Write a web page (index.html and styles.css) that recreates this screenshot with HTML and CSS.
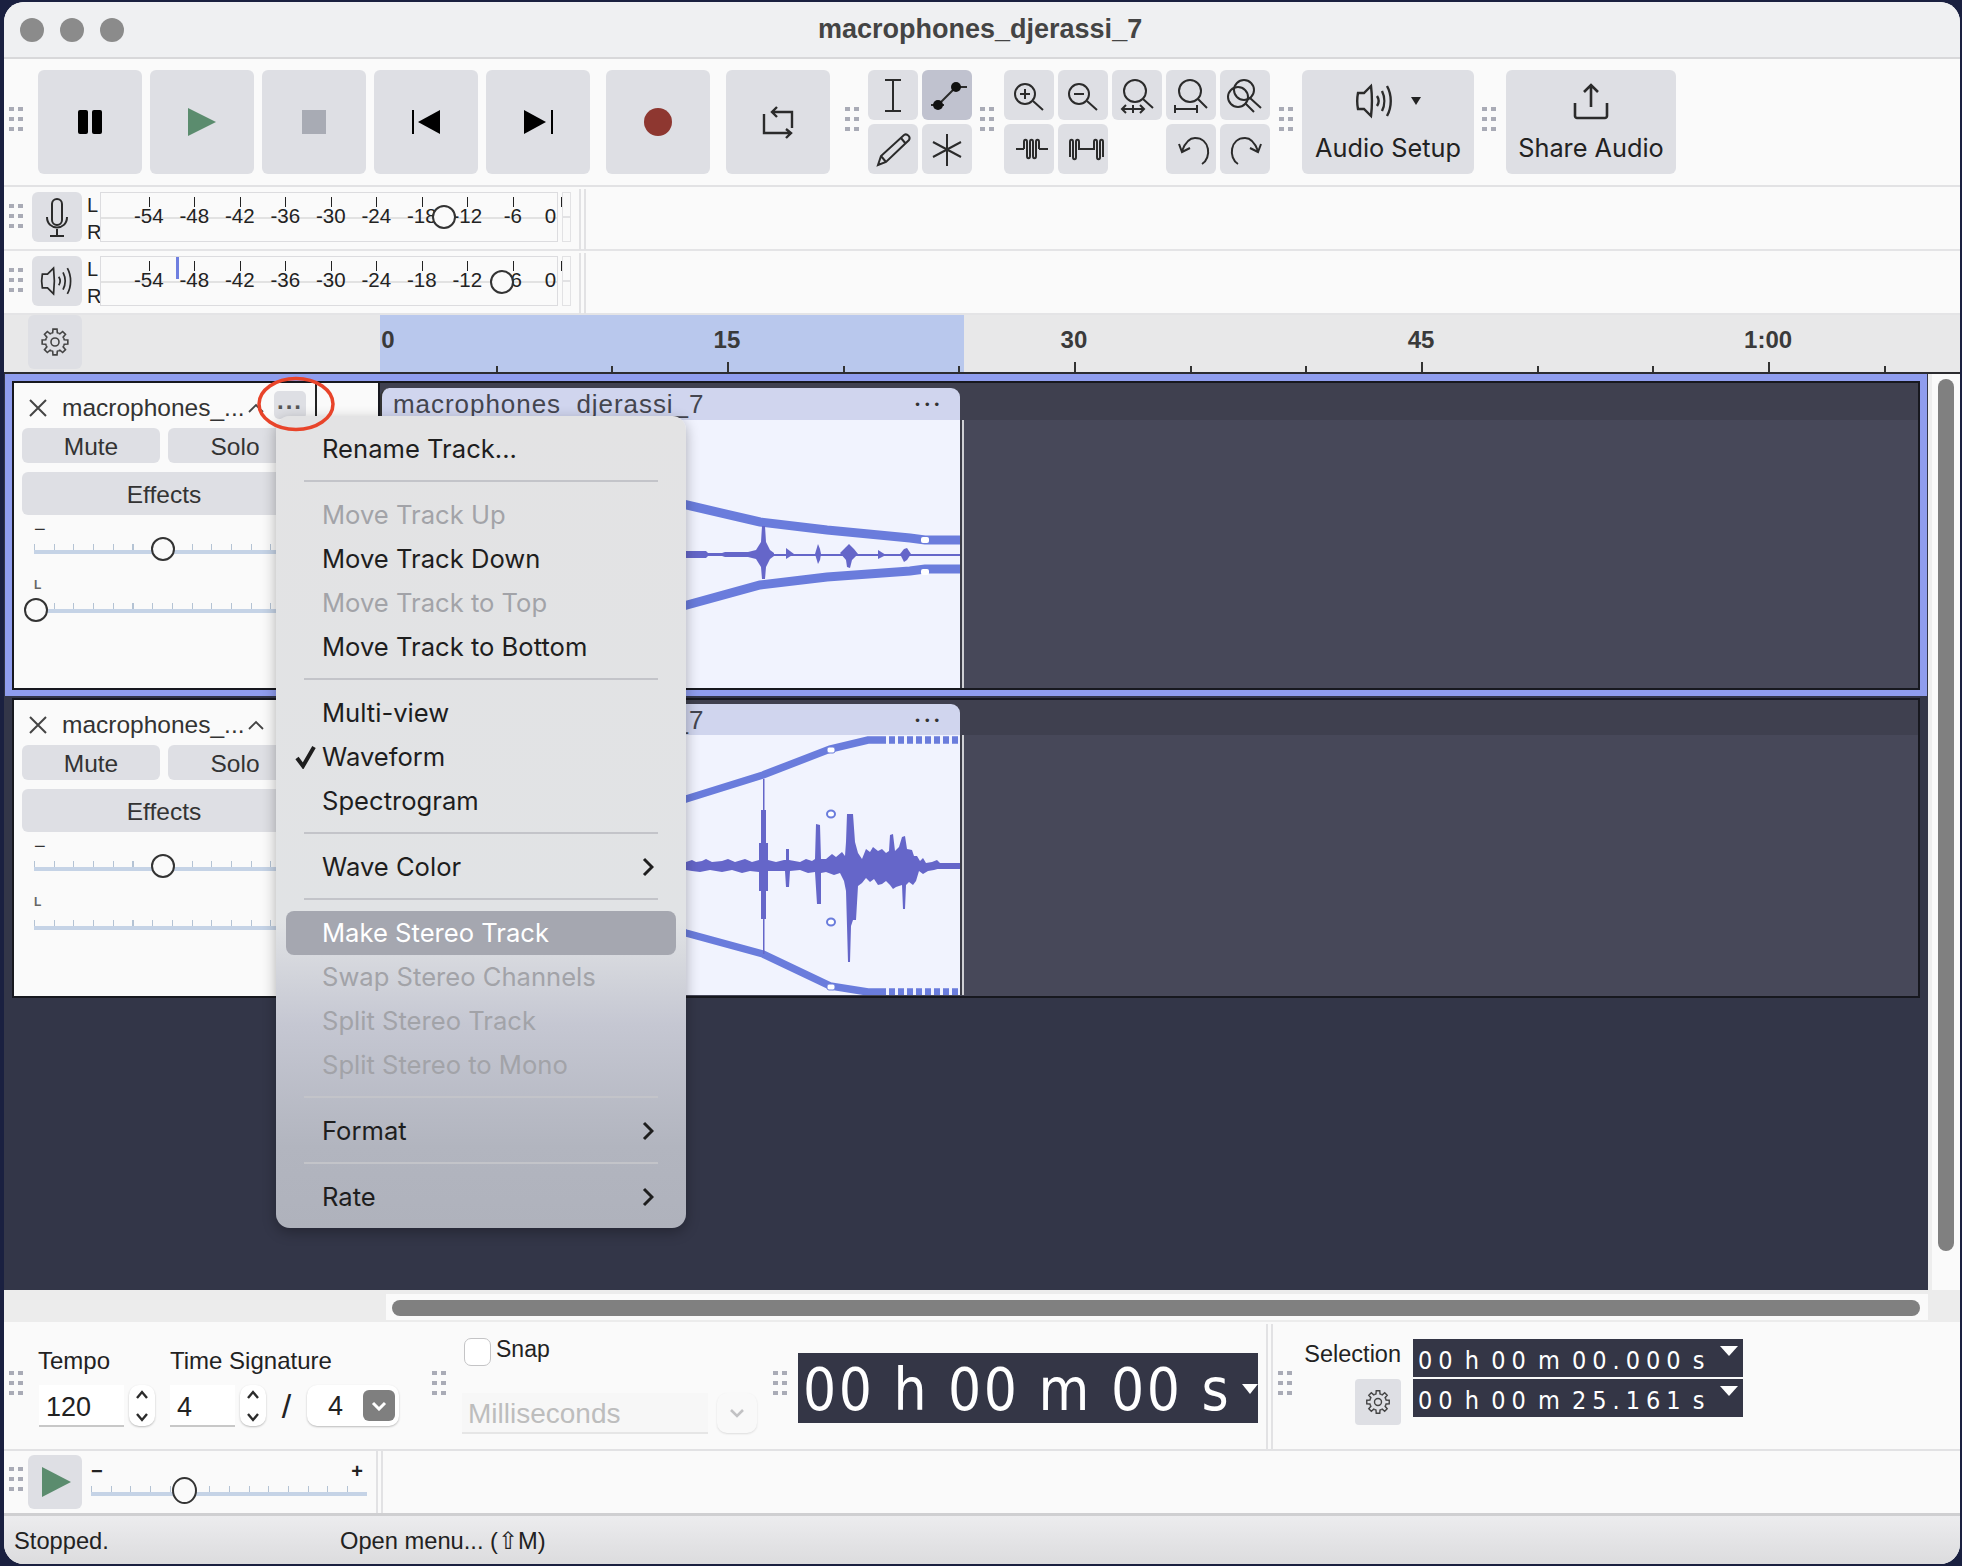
FILE: index.html
```html
<!DOCTYPE html>
<html lang="en">
<head>
<meta charset="UTF-8">
<title>macrophones_djerassi_7</title>
<link rel="stylesheet" href="styles.css">
</head>
<body>
<svg class="defs" width="0" height="0">
    <defs>
        <g id="gear">
            <polyline id="gearTooth" points="8.78,-3.64 9.22,-2.30 12.84,-2.03 12.84,2.03 9.22,2.30 8.78,3.64"/>
            <use href="#gearTooth" transform="rotate(45)"/>
            <use href="#gearTooth" transform="rotate(90)"/>
            <use href="#gearTooth" transform="rotate(135)"/>
            <use href="#gearTooth" transform="rotate(180)"/>
            <use href="#gearTooth" transform="rotate(225)"/>
            <use href="#gearTooth" transform="rotate(270)"/>
            <use href="#gearTooth" transform="rotate(315)"/>
            <circle r="4"/>
        </g>
        <path id="speaker" d="M2 12h6l7-7c1 8 1 22 0 30l-7-7H2c-1-5-1-11 0-16zM21 15c2 3 2 7 0 10M26 10c3 6 3 14 0 20M31 5c5 9 5 21 0 30"/>
    </defs>
</svg>

<div class="window">
    <!-- title bar -->
    <div class="titlebar">
        <div class="lights"><span></span><span></span><span></span></div>
        <div class="title">macrophones_djerassi_7</div>
    </div>

    <!-- transport + tools -->
    <div class="toolbar">
        <div class="grip g-first"></div>
        <div class="transport">
            <button class="tbtn"><svg class="ico" viewBox="0 0 40 40"><rect x="8" y="8" width="10" height="24" rx="2"/><rect x="22" y="8" width="10" height="24" rx="2"/></svg></button>
            <button class="tbtn"><svg class="ico" viewBox="0 0 40 40"><polygon class="green" points="6,6 34,20 6,34"/></svg></button>
            <button class="tbtn"><svg class="ico" viewBox="0 0 40 40"><rect class="stop" x="8" y="8" width="24" height="24"/></svg></button>
            <button class="tbtn"><svg class="ico" viewBox="0 0 40 40"><rect x="6" y="8" width="2" height="24"/><polygon points="12,20 34,8 34,32"/></svg></button>
            <button class="tbtn"><svg class="ico" viewBox="0 0 40 40"><polygon points="6,8 28,20 6,32"/><rect x="33" y="8" width="2" height="24"/></svg></button>
            <button class="tbtn t-gap"><svg class="ico" viewBox="0 0 40 40"><circle class="rec" cx="20" cy="20" r="14"/></svg></button>
            <button class="tbtn t-gap"><svg class="ico line" viewBox="0 0 40 40"><path d="M34 26V10H15M19 5l-5 5 5 5M6 12v19h26M28 27l5 4-5 5"/></svg></button>
        </div>
        <div class="grip g-tools"></div>
        <div class="tools two">
            <button class="sbtn"><svg viewBox="0 0 50 50" class="line"><path d="M25 10v31M17 10h16M17 41h16"/></svg></button>
            <button class="sbtn on"><svg viewBox="0 0 50 50" class="line"><path d="M9 35h13M30 17h15M16 35l18-18"/><circle class="dot" cx="16" cy="35" r="5"/><circle class="dot" cx="34" cy="17" r="5"/></svg></button>
            <button class="sbtn"><svg viewBox="0 0 50 50" class="line"><path d="M10 41l3-9 23-21c3-2 7 2 5 5L18 38zM13 32l5 6M33 14l5 6"/></svg></button>
            <button class="sbtn"><svg viewBox="0 0 50 50" class="line"><path d="M25 10v32M11 18l28 15M11 33l28-15"/></svg></button>
        </div>
        <div class="grip g-zoom"></div>
        <div class="tools five">
            <button class="sbtn"><svg viewBox="0 0 50 50" class="line"><circle cx="21" cy="24" r="10"/><path d="M21 19v10M16 24h10M29 31l10 9"/></svg></button>
            <button class="sbtn"><svg viewBox="0 0 50 50" class="line"><circle cx="21" cy="24" r="10"/><path d="M16 24h10M29 31l10 9"/></svg></button>
            <button class="sbtn"><svg viewBox="0 0 50 50" class="line"><circle cx="23" cy="21" r="11"/><path d="M31 29l10 9M10 39h22M14 35l-4 4 4 4M28 35l4 4-4 4M21 35v8"/></svg></button>
            <button class="sbtn"><svg viewBox="0 0 50 50" class="line"><circle cx="24" cy="21" r="11"/><path d="M32 29l9 9M9 39h22M9 35v8M31 35v8"/></svg></button>
            <button class="sbtn"><svg viewBox="0 0 50 50" class="line"><circle cx="24" cy="20" r="10"/><circle cx="18" cy="27" r="10"/><path d="M30 28l11 10M25 33l9 9"/></svg></button>
            <button class="sbtn"><svg viewBox="0 0 50 50" class="line"><path d="M12 25h8M35 25h9M20 25v-7c0-3 3-3 3 0v14c0 3 3 3 3 0V18c0-3 3-3 3 0v14c0 3 3 3 3 0V18c0-3 3-3 3 0v7"/></svg></button>
            <button class="sbtn"><svg viewBox="0 0 50 50" class="line"><path d="M12 33V18c0-3 3-3 3 0v15c0 3 3 3 3 0V18c0-3 3-3 3 0v7h15v-7c0-3 3-3 3 0v15c0 3 3 3 3 0V18c0-3 3-3 3 0v15"/></svg></button>
            <span class="sblank"></span>
            <button class="sbtn"><svg viewBox="0 0 50 50" class="line"><path d="M36 40c10-6 8-26-7-26-6 0-10 5-13 13M13 20l3 8 8-4"/></svg></button>
            <button class="sbtn"><svg viewBox="0 0 50 50" class="line"><path d="M18 40C8 34 10 14 25 14c6 0 10 5 13 13M41 20l-3 8-8-4"/></svg></button>
        </div>
        <div class="grip g-setup"></div>
        <button class="wbtn setup">
            <span class="wico"><svg class="line" width="40" height="40" viewBox="0 0 40 40"><use href="#speaker"/></svg><i class="drop"></i></span>
            <span>Audio Setup</span>
        </button>
        <div class="grip g-share"></div>
        <button class="wbtn share">
            <span class="wico"><svg class="line wide" width="40" height="40" viewBox="0 0 40 40"><path d="M20 26V4M13 11l7-7 7 7M4 22v13c0 1 1 2 2 2h28c1 0 2-1 2-2V22"/></svg></span>
            <span>Share Audio</span>
        </button>
    </div>

    <!-- recording meter -->
    <div class="meter-row">
        <div class="grip g-meter"></div>
        <button class="mbtn"><svg class="line" viewBox="0 0 50 50" width="50" height="50"><rect x="20" y="7" width="10" height="26" rx="5"/><path d="M15 25c0 14 20 14 20 0M25 37v6M18 44h14"/></svg></button>
        <div class="lr"><span>L</span><span>R</span></div>
        <div class="meter">
            <div class="db-scale">
                <span class="db">-54</span><span class="db">-48</span><span class="db">-42</span><span class="db">-36</span><span class="db">-30</span><span class="db">-24</span><span class="db">-18</span><span class="db">-12</span><span class="db">-6</span><span class="db">0</span>
            </div>
            <i class="knob k-meter1"></i>
        </div>
        <div class="meter-end"><i></i><i></i></div>
        <div class="vdiv"></div>
    </div>

    <!-- playback meter -->
    <div class="meter-row">
        <div class="grip g-meter"></div>
        <button class="mbtn"><svg class="line" viewBox="-10 -9 58 58" width="50" height="50"><use href="#speaker"/></svg></button>
        <div class="lr"><span>L</span><span>R</span></div>
        <div class="meter">
            <div class="db-scale">
                <span class="db">-54</span><span class="db">-48</span><span class="db">-42</span><span class="db">-36</span><span class="db">-30</span><span class="db">-24</span><span class="db">-18</span><span class="db">-12</span><span class="db">-6</span><span class="db">0</span>
            </div>
            <i class="peak"></i>
            <i class="knob k-meter2"></i>
        </div>
        <div class="meter-end"><i></i><i></i></div>
        <div class="vdiv"></div>
    </div>

    <!-- timeline -->
    <div class="ruler">
        <i class="ruler-sel"></i>
        <button class="gear-btn"><svg class="line thin" viewBox="-16 -16 32 32" width="32" height="32"><use href="#gear"/></svg></button>
        <div class="ruler-scale">
            <div class="rc major zero"><b>0</b></div>
            <div class="rc"></div><div class="rc"></div>
            <div class="rc major"><b>15</b></div>
            <div class="rc"></div><div class="rc"></div>
            <div class="rc major"><b>30</b></div>
            <div class="rc"></div><div class="rc"></div>
            <div class="rc major"><b>45</b></div>
            <div class="rc"></div><div class="rc"></div>
            <div class="rc major"><b>1:00</b></div>
            <div class="rc"></div><div class="rc"></div>
        </div>
    </div>

    <!-- tracks -->
    <div class="main">
        <div class="tracks">
            <div class="track-wrap selected">
                <div class="track">
                    <div class="panel">
                        <div class="panel-head">
                            <svg class="close line" viewBox="0 0 20 20" width="20" height="20"><path d="M2 2l16 16M18 2L2 18"/></svg>
                            <span class="tname">macrophones_...</span>
                            <svg class="collapse line" viewBox="0 0 16 10" width="16" height="10"><path d="M1 9l7-7 7 7"/></svg>
                            <span class="more">...</span>
                            <i class="split"></i>
                        </div>
                        <div class="mute-row"><button class="pbtn mute">Mute</button><button class="pbtn solo">Solo</button></div>
                        <button class="pbtn effects">Effects</button>
                        <div class="slider gain"><span class="mark">−</span><div class="scale"></div><i class="knob k-gain"></i></div>
                        <div class="slider pan"><span class="mark small">L</span><div class="scale"></div><i class="knob k-pan"></i></div>
                    </div>
                    <div class="lane">
                        <div class="clip">
                            <div class="clip-head"><span>macrophones_djerassi_7</span><em>•••</em></div>
                            <div class="clip-body tall">
                                <svg viewBox="380 419 580 268" width="580" height="268">
                                    <polyline class="env" points="600,484 687,504 760,521 827,529 910,537 925,539 960,539"/>
                                    <polyline class="env" points="600,628 687,604 760,584 827,576 910,570 925,568 960,568"/>
                                    <rect class="wave" x="600" y="553" width="360" height="2"/>
                                    <polygon class="wave" points="686,550 706,550 708,552 722,552 725,551 736,551 748,551 756,549 761,541 762,525 765,525 766,541 770,549 774,552 774,555 770,558 766,566 765,578 762,578 761,566 756,558 748,556 736,556 725,556 722,555 708,555 706,557 686,557"/>
                                    <polygon class="wave" points="786,547 794,553 786,558"/>
                                    <polygon class="wave" points="815,553 818,543 820,548 821,553 820,559 818,563"/>
                                    <polygon class="wave" points="840,552 846,546 849,543 854,548 858,553 852,559 850,567 847,566 846,559"/>
                                    <polygon class="wave" points="878,549 886,554 878,558"/>
                                    <polygon class="wave" points="900,553 904,548 907,547 911,553 907,559 904,561"/>
                                    <rect class="pt" x="921" y="536" width="8" height="6" rx="2"/>
                                    <rect class="pt" x="921" y="568" width="8" height="6" rx="2"/>
                                </svg>
                            </div>
                        </div>
                    </div>
                </div>
            </div>
            <div class="track-wrap">
                <div class="track second">
                    <div class="panel">
                        <div class="panel-head">
                            <svg class="close line" viewBox="0 0 20 20" width="20" height="20"><path d="M2 2l16 16M18 2L2 18"/></svg>
                            <span class="tname">macrophones_...</span>
                            <svg class="collapse line" viewBox="0 0 16 10" width="16" height="10"><path d="M1 9l7-7 7 7"/></svg>
                        </div>
                        <div class="mute-row"><button class="pbtn mute">Mute</button><button class="pbtn solo">Solo</button></div>
                        <button class="pbtn effects">Effects</button>
                        <div class="slider gain"><span class="mark">−</span><div class="scale"></div><i class="knob k-gain"></i></div>
                        <div class="slider pan"><span class="mark small">L</span><div class="scale"></div></div>
                    </div>
                    <div class="lane">
                        <div class="clip">
                            <div class="clip-head"><span>macrophones_djerassi_7</span><em>•••</em></div>
                            <div class="clip-body">
                                <svg viewBox="380 734 580 260" width="580" height="260">
                                    <polyline class="env e2" points="600,826 686,798 763,774 830,748 868,739 880,739"/>
                                    <polyline class="env e2 dash" points="880,739 960,739"/>
                                    <polyline class="env e2" points="600,904 686,932 763,953 830,985 868,991 880,991"/>
                                    <polyline class="env e2 dash" points="880,991 960,991"/>
                                    <rect class="wave" x="600" y="862" width="360" height="6"/>
                                    <polygon class="wave" points="686,861 692,859 696,861 702,860 706,858 712,861 722,860 728,858 735,861 745,858 752,861 759,859 759,842 761,842 761,809 763,809 763,778 764.5,778 764.5,809 766,809 766,842 768,842 768,859 776,861 784,859 786,859 786,848 789,848 789,859 800,861 806,858 812,860 815,858 816,823 820,824 821,858 826,858 832,853 836,856 842,851 845,855 846,841 847,813 853,813 855,841 858,852 862,858 866,848 870,851 873,846 878,850 882,848 886,852 889,850 890,834 893,833 895,850 899,846 902,836 905,835 907,848 912,849 914,855 917,855 920,860 923,857 926,862 932,861 937,859 941,863 941,867 934,869 928,870 923,873 919,870 916,880 913,884 909,881 906,884 905,908 903,908 902,884 896,886 893,888 890,884 886,880 882,883 878,884 874,878 870,881 866,877 862,882 858,885 856,919 853,919 851,925 850,961 848,961 847,925 846,890 844,880 840,872 834,874 826,871 821,872 821,903 817,903 815,871 808,872 800,869 790,870 789,886 786,886 785,870 776,870 768,870 768,890 766,890 766,918 764.5,918 764.5,953 763,953 763,918 761,918 761,890 759,890 759,871 750,870 742,872 732,869 722,871 710,869 700,871 692,870 686,869"/>
                                    <rect class="pt ring" x="827" y="746" width="8" height="6" rx="2"/>
                                    <rect class="pt ring" x="827" y="983" width="8" height="6" rx="2"/>
                                    <ellipse class="cp" cx="831" cy="813" rx="4" ry="3.5"/>
                                    <ellipse class="cp" cx="831" cy="921" rx="4" ry="3.5"/>
                                </svg>
                            </div>
                        </div>
                    </div>
                </div>
            </div>
        </div>
        <div class="vscroll"><i></i></div>
    </div>

    <div class="hscroll-row">
        <div class="hscroll"><i></i></div>
        <div class="corner"></div>
    </div>

    <!-- bottom bars -->
    <div class="bottombar">
        <div class="grip g-b1"></div>
        <div class="field-group tempo">
            <label>Tempo</label>
            <div class="fields"><span class="num n-tempo">120</span><span class="spin"><svg class="line" viewBox="0 0 14 36" width="14" height="36"><path d="M2 10l5-6 5 6M2 26l5 6 5-6"/></svg></span></div>
        </div>
        <div class="field-group sig">
            <label>Time Signature</label>
            <div class="fields">
                <span class="num n-sig">4</span><span class="spin"><svg class="line" viewBox="0 0 14 36" width="14" height="36"><path d="M2 10l5-6 5 6M2 26l5 6 5-6"/></svg></span>
                <span class="slash">/</span>
                <span class="sel-4">4<i class="sel-btn"><svg class="line white" viewBox="0 0 16 10" width="16" height="10"><path d="M2 2l6 6 6-6"/></svg></i></span>
            </div>
        </div>
        <div class="grip g-b2"></div>
        <div class="snap">
            <div class="snap-top"><i class="check"></i><span>Snap</span></div>
            <div class="snap-bot"><span class="combo">Milliseconds</span><i class="combo-btn"><svg class="line dim" viewBox="0 0 16 10" width="16" height="10"><path d="M2 2l6 6 6-6"/></svg></i></div>
        </div>
        <div class="grip g-b3"></div>
        <div class="big-time">00 h 00 m 00 s<i class="tri big"></i></div>
        <div class="vdiv v-b"></div>
        <div class="grip g-b4"></div>
        <div class="selection">
            <div class="sel-labels">
                <span>Selection</span>
                <button class="gear-small"><svg class="line thin" viewBox="-16 -16 32 32" width="28" height="28"><use href="#gear"/></svg></button>
            </div>
            <div class="sel-times">
                <div class="small-time">00 h 00 m 00.000 s<i class="tri"></i></div>
                <div class="small-time">00 h 00 m 25.161 s<i class="tri"></i></div>
            </div>
        </div>
    </div>

    <div class="speedbar">
        <div class="grip g-b5"></div>
        <button class="play-small"><svg viewBox="0 0 40 40" width="40" height="40"><polygon class="green" points="7,5 36,20 7,35"/></svg></button>
        <div class="slider speed"><span class="mark m-minus">−</span><span class="mark m-plus">+</span><div class="scale"></div><i class="knob k-speed"></i></div>
        <div class="vdiv v-s"></div>
    </div>

    <div class="statusbar"><span class="st1">Stopped.</span><span>Open menu... (⇧M)</span></div>

    <!-- track menu -->
    <div class="menu">
        <div class="mi">Rename Track...</div>
        <div class="msep"></div>
        <div class="mi off">Move Track Up</div>
        <div class="mi">Move Track Down</div>
        <div class="mi off">Move Track to Top</div>
        <div class="mi">Move Track to Bottom</div>
        <div class="msep"></div>
        <div class="mi">Multi-view</div>
        <div class="mi"><svg class="tick" viewBox="0 0 22 24" width="22" height="24"><path d="M2 13l6 8L19 2"/></svg>Waveform</div>
        <div class="mi">Spectrogram</div>
        <div class="msep"></div>
        <div class="mi">Wave Color<svg class="chev" viewBox="0 0 12 20" width="12" height="20"><path d="M2 2l8 8-8 8"/></svg></div>
        <div class="msep"></div>
        <div class="mi hot">Make Stereo Track</div>
        <div class="mi off">Swap Stereo Channels</div>
        <div class="mi off">Split Stereo Track</div>
        <div class="mi off">Split Stereo to Mono</div>
        <div class="msep"></div>
        <div class="mi">Format<svg class="chev" viewBox="0 0 12 20" width="12" height="20"><path d="M2 2l8 8-8 8"/></svg></div>
        <div class="msep"></div>
        <div class="mi">Rate<svg class="chev" viewBox="0 0 12 20" width="12" height="20"><path d="M2 2l8 8-8 8"/></svg></div>
    </div>

    <!-- annotation ring -->
    <svg class="ring-mark" viewBox="0 0 84 60" width="84" height="60"><ellipse cx="42" cy="30" rx="37" ry="25.5"/></svg>
</div>
</body>
</html>
```
FILE: styles.css
```css
* {
    box-sizing: border-box;
}
html, body {
    margin: 0;
    height: 100%;
}
body {
    background-color: #1a2040;
    font-family: "Liberation Sans", Arial, sans-serif;
    color: #222;
    overflow: hidden;
}
button {
    border: none;
    padding: 0;
    margin: 0;
    font: inherit;
    color: inherit;
}
i, em {
    font-style: normal;
    display: block;
}
.defs {
    position: absolute;
}
.window {
    position: relative;
    width: 1956px;
    height: 1562px;
    margin: 2px 0 0 4px;
    background-color: #fafafa;
    border-radius: 20px;
    overflow: hidden;
    display: flex;
    flex-direction: column;
}

/* shared icon strokes */
.line {
    fill: none;
    stroke: #2b2b2b;
    stroke-width: 2.4;
}
.sbtn .line, .mbtn .line {
    stroke-width: 2;
}
.line.thin {
    stroke: #444;
    stroke-width: 1.6;
}
.line.wide {
    stroke-width: 2.6;
}
.line .dot {
    fill: #111;
    stroke: none;
}
.line.white {
    stroke: #fff;
    stroke-width: 3;
}
.line.dim {
    stroke: #c2c2c4;
    stroke-width: 2.6;
}
.green {
    fill: #5b8c6e;
}
.stop {
    fill: #a8abb4;
}
.rec {
    fill: #8e3730;
}
.grip {
    flex: none;
    width: 14px;
    height: 24px;
    background: conic-gradient(from 270deg at 5px 4px, #a9abb6 25%, transparent 0) 0 0 / 9px 10px;
}

/* title */
.titlebar {
    flex: none;
    height: 57px;
    background-color: #eff0f2;
    border-bottom: 2px solid #d8d8da;
    display: flex;
    align-items: center;
    position: relative;
}
.lights {
    display: flex;
    gap: 16px;
    margin-left: 16px;
}
.lights span {
    width: 24px;
    height: 24px;
    border-radius: 50%;
    background-color: #8b8b8b;
}
.title {
    position: absolute;
    left: 814px;
    top: 12px;
    font-size: 27px;
    font-weight: bold;
    line-height: 30px;
    color: #444;
}

/* top toolbar */
.toolbar {
    flex: none;
    height: 128px;
    padding-top: 11px;
    display: flex;
    align-items: flex-start;
    border-bottom: 2px solid #e2e2e4;
}
.toolbar .grip {
    margin-top: 37px;
}
.g-first {
    margin-left: 5px;
    margin-right: 15px;
}
.transport {
    display: flex;
    gap: 8px;
}
.tbtn {
    width: 104px;
    height: 104px;
    background-color: #dedfe4;
    border-radius: 6px;
    display: flex;
    align-items: center;
    justify-content: center;
}
.tbtn.t-gap {
    margin-left: 8px;
}
.ico {
    width: 40px;
    height: 40px;
}
.g-tools {
    margin-left: 15px;
    margin-right: 9px;
}
.g-zoom {
    margin-left: 8px;
    margin-right: 10px;
}
.g-setup {
    margin-left: 9px;
    margin-right: 9px;
}
.g-share {
    margin-left: 8px;
    margin-right: 10px;
}
.tools {
    display: grid;
    grid-template-rows: 50px 50px;
    grid-auto-flow: row;
    gap: 4px;
}
.tools.two {
    grid-template-columns: repeat(2, 50px);
}
.tools.five {
    grid-template-columns: repeat(5, 50px);
}
.sbtn {
    width: 50px;
    height: 50px;
    background-color: #dedfe4;
    border-radius: 6px;
}
.sbtn svg {
    width: 50px;
    height: 50px;
    display: block;
}
.sbtn.on {
    background-color: #c0c2cf;
}
.wbtn {
    height: 104px;
    background-color: #dedfe4;
    border-radius: 6px;
    font-family: Inter, "Liberation Sans", sans-serif;
    font-size: 25.3px;
    color: #222;
    display: flex;
    flex-direction: column;
    align-items: center;
}
.setup {
    width: 172px;
}
.share {
    width: 170px;
}
.wico {
    height: 62px;
    display: flex;
    align-items: center;
    gap: 15px;
}
.wico svg {
    display: block;
}
.drop {
    width: 0;
    height: 0;
    border-left: 5px solid transparent;
    border-right: 5px solid transparent;
    border-top: 8px solid #222;
}

/* meter rows */
.meter-row {
    flex: none;
    height: 64px;
    border-bottom: 2px solid #e4e4e6;
    padding-top: 5px;
    display: flex;
    align-items: flex-start;
}
.g-meter {
    margin: 12px 9px 0 5px;
}
.mbtn {
    width: 50px;
    height: 50px;
    background-color: #dedfe4;
    border-radius: 6px;
}
.mbtn svg {
    display: block;
}
.lr {
    width: 14px;
    margin-left: 5px;
    margin-right: -1px;
    height: 50px;
    font-size: 20px;
    line-height: 27px;
    display: flex;
    flex-direction: column;
}
.meter {
    position: relative;
    width: 458px;
    height: 50px;
    background: linear-gradient(#e2e2e2, #e2e2e2) 0 24px / 100% 2px no-repeat;
    border: 1px solid #dcdcdf;
}
.db-scale {
    display: flex;
    padding: 4px 0 0 25px;
}
.db {
    position: relative;
    flex: none;
    width: 45.5px;
    padding-top: 7px;
    text-align: center;
    font-size: 20.5px;
    line-height: 23px;
    color: #222;
}
.db::before {
    content: "";
    position: absolute;
    left: 50%;
    top: 0;
    width: 1px;
    height: 10px;
    background-color: #222;
}
.db:nth-child(10) {
    width: 30px;
}
.db:nth-child(10)::before {
    left: 85%;
}
.knob {
    position: absolute;
    width: 24px;
    height: 24px;
    border-radius: 50%;
    background-color: #fafafa;
    border: 2.5px solid #333;
}
.k-meter1 {
    left: 331px;
    top: 12px;
}
.k-meter2 {
    left: 389px;
    top: 13px;
}
.peak {
    position: absolute;
    left: 75px;
    top: 0;
    width: 3px;
    height: 22px;
    background-color: #6f7fe0;
}
.meter-end {
    width: 9px;
    height: 50px;
    margin-left: 4px;
    display: flex;
    flex-direction: column;
}
.meter-end i {
    flex: 1;
    border: 1px solid #e2e2e4;
}
.vdiv {
    flex: none;
    width: 7px;
    height: 61px;
    margin-top: -3px;
    margin-left: 8px;
    border-left: 2px solid #e2e2e4;
    border-right: 2px solid #e2e2e4;
}

/* ruler */
.ruler {
    flex: none;
    position: relative;
    height: 59px;
    background-color: #e8e8e9;
    border-bottom: 2px solid #2c2c30;
    display: flex;
    overflow: hidden;
}
.ruler-sel {
    position: absolute;
    left: 376px;
    top: 0;
    width: 584px;
    height: 100%;
    background-color: #b9c8ed;
}
.gear-btn {
    position: relative;
    flex: none;
    width: 54px;
    height: 54px;
    margin-left: 24px;
    background-color: #dedfe4;
    border-radius: 6px;
    display: flex;
    align-items: center;
    justify-content: center;
}
.ruler-scale {
    position: relative;
    flex: none;
    display: flex;
    margin-left: 240px;
}
.rc {
    position: relative;
    flex: none;
    width: 115.7px;
    height: 57px;
    text-align: center;
}
.rc::after {
    content: "";
    position: absolute;
    left: 50%;
    bottom: 0;
    width: 2px;
    height: 6px;
    background-color: #333;
}
.rc.major::after {
    height: 10px;
}
.rc b {
    display: block;
    padding-top: 11px;
    font-size: 24px;
    line-height: 28px;
    color: #3a3a3a;
}
.rc.zero b {
    padding-left: 16px;
}
.rc.zero::after {
    display: none;
}

/* tracks */
.main {
    flex: none;
    height: 916px;
    display: flex;
}
.tracks {
    width: 1924px;
    padding-left: 1px;
    background-color: #333648;
}
.track-wrap {
    width: 1922px;
    height: 322px;
    padding: 7px 7px 6px 7px;
}
.track-wrap.selected {
    background-color: #8f9dee;
}
.track-wrap:not(.selected) {
    height: 304px;
    padding: 2px 7px 2px 7px;
}
.track {
    height: 100%;
    border: 2px solid #17181f;
    display: flex;
}
.panel {
    flex: none;
    position: relative;
    width: 366px;
    border-right: 2px solid #17181f;
    background-color: #fafafa;
    overflow: hidden;
}
.panel-head {
    height: 45px;
    padding-top: 5px;
    display: flex;
    align-items: center;
    position: relative;
    color: #333;
}
.close {
    margin-left: 14px;
    flex: none;
    stroke: #444;
    stroke-width: 2;
}
.tname {
    margin-left: 14px;
    font-size: 24.5px;
    width: 186px;
    flex: none;
    white-space: nowrap;
}
.collapse {
    flex: none;
    margin-left: 0;
    stroke: #444;
    stroke-width: 1.8;
}
.more {
    flex: none;
    width: 32px;
    height: 28px;
    margin-left: 10px;
    margin-top: -6px;
    background-color: #dedfe4;
    border-radius: 5px;
    text-align: center;
    font-size: 24px;
    font-weight: bold;
    line-height: 20px;
    letter-spacing: 2px;
    color: #555;
}
.split {
    position: absolute;
    left: 301px;
    top: 0;
    width: 2px;
    height: 45px;
    background-color: #222;
}
.mute-row {
    display: flex;
    gap: 8px;
    padding-left: 8px;
}
.pbtn {
    height: 35px;
    background-color: #dedfe4;
    border-radius: 6px;
    font-size: 24.5px;
    line-height: 38px;
    text-align: center;
    color: #333;
}
.mute {
    width: 138px;
}
.solo {
    width: 128px;
    padding-left: 6px;
}
.effects {
    display: block;
    width: 274px;
    height: 43px;
    margin: 9px 0 0 8px;
    line-height: 45px;
    padding-left: 10px;
}
.slider {
    position: relative;
}
.mark {
    position: absolute;
    left: 0;
    top: 0;
    font-size: 20px;
    line-height: 20px;
    color: #333;
}
.mark.small {
    font-size: 12px;
    font-weight: bold;
    line-height: 14px;
    color: #666;
}
.scale {
    position: absolute;
    left: 0;
    right: 0;
    bottom: 0;
    height: 10px;
    border-bottom: 4px solid #c5d3e6;
    background: repeating-linear-gradient(90deg, #b4c3d4 0 1px, transparent 1px 19.7px);
}
.gain {
    height: 35px;
    margin: 4px 0 0 20px;
    width: 260px;
}
.pan {
    height: 59px;
    margin: 0 0 0 20px;
    width: 260px;
}
.gain .mark {
    left: 0;
}
.pan .mark {
    top: 24px;
}
.k-gain {
    left: 117px;
    top: 18px;
}
.k-pan {
    left: -10px;
    bottom: -9px;
}
.lane {
    flex: 1;
    background: linear-gradient(#3f404f 37px, #474859 0);
}
.second .lane {
    background: linear-gradient(#3f404f 35px, #474859 0);
}
.clip {
    width: 580px;
    margin-top: 5px;
}
.second .clip {
    margin-top: 4px;
}
.clip-head {
    height: 32px;
    background-color: #d0d5ee;
    border-radius: 9px 9px 0 0;
    border-left: 2px solid #333;
    display: flex;
    justify-content: space-between;
    overflow: hidden;
    font-size: 26px;
    letter-spacing: 0.95px;
    line-height: 33px;
    color: #44454f;
    padding: 0 16px 0 11px;
    white-space: nowrap;
}
.second .clip-head {
    height: 31px;
}
.clip-head em {
    font-size: 13px;
    letter-spacing: 5px;
    color: #333;
}
.clip-body {
    width: 582px;
    height: 260px;
    background-color: #f1f3fe;
    border-right: 2px solid #3a3b46;
    box-shadow: 2px 0 0 #cfd0d4;
}
.clip-body.tall {
    height: 268px;
}
.clip-body svg {
    display: block;
}
.env {
    fill: none;
    stroke: #6a7cdc;
    stroke-width: 9;
}
.e2 {
    stroke-width: 7.5;
}
.dash {
    stroke-dasharray: 6 3;
}
.wave {
    fill: #6566c9;
}
.pt {
    fill: #fff;
}
.pt.ring {
    stroke: #6a7cdc;
    stroke-width: 1;
}
.cp {
    fill: #fff;
    stroke: #6a7cdc;
    stroke-width: 2;
}
.vscroll {
    width: 32px;
    background-color: #fafafa;
    border-left: 4px solid #eee;
    padding: 5px 0 0 6px;
}
.vscroll i {
    width: 16px;
    height: 872px;
    border-radius: 8px;
    background-color: #808080;
}

/* scroll row */
.hscroll-row {
    flex: none;
    height: 32px;
    display: flex;
    background-color: #ececec;
}
.hscroll {
    margin: 4px 0 2px 382px;
    width: 1542px;
    background-color: #fafafa;
    padding: 6px 0 0 6px;
}
.hscroll i {
    width: 1528px;
    height: 16px;
    border-radius: 8px;
    background-color: #808080;
}
.corner {
    flex: 1;
}

/* bottom bars */
.bottombar {
    flex: none;
    height: 129px;
    border-bottom: 2px solid #e2e2e4;
    display: flex;
    align-items: flex-start;
    font-size: 24px;
}
.bottombar .grip {
    margin-top: 49px;
}
.g-b1 {
    margin-left: 5px;
    margin-right: 15px;
}
.field-group {
    padding-top: 25px;
}
.field-group label {
    display: block;
    height: 28px;
    line-height: 28px;
    color: #222;
}
.fields {
    margin-top: 10px;
    display: flex;
    align-items: flex-start;
}
.sig {
    margin-left: 15px;
}
.num {
    height: 42px;
    background-color: #fff;
    border-bottom: 2px solid #c8c8c8;
    line-height: 44px;
    font-size: 27px;
    padding-left: 7px;
}
.n-tempo {
    width: 85px;
    margin-left: 1px;
}
.n-sig {
    width: 65px;
}
.spin {
    width: 26px;
    height: 41px;
    margin-left: 5px;
    background-color: #fff;
    border-radius: 10px;
    box-shadow: 0 1px 2px #bbb;
    display: flex;
    align-items: center;
    justify-content: center;
}
.tempo .spin {
    margin-right: 0;
}
.slash {
    width: 41px;
    text-align: center;
    font-size: 34px;
    line-height: 42px;
}
.sel-4 {
    position: relative;
    width: 92px;
    height: 41px;
    background-color: #fff;
    border-radius: 10px;
    box-shadow: 0 1px 2px #bbb;
    font-size: 27px;
    line-height: 42px;
    padding-left: 21px;
}
.sel-btn {
    position: absolute;
    right: 4px;
    top: 5px;
    width: 32px;
    height: 31px;
    border-radius: 6px;
    background-color: #7f7f7f;
    display: flex;
    align-items: center;
    justify-content: center;
}
.g-b2 {
    margin-left: 33px;
    margin-right: 16px;
}
.snap {
    width: 295px;
    padding-top: 16px;
}
.snap-top {
    display: flex;
    align-items: flex-start;
    height: 55px;
    margin-left: 2px;
    line-height: 22px;
    font-size: 23px;
}
.check {
    width: 27px;
    height: 28px;
    background-color: #fff;
    border: 1px solid #c4c4c6;
    border-radius: 7px;
    margin-right: 5px;
}
.snap-bot {
    display: flex;
}
.combo {
    width: 246px;
    height: 41px;
    background-color: #f7f7f7;
    border-bottom: 2px solid #e6e6e6;
    color: #bdbdbd;
    font-size: 28px;
    line-height: 42px;
    padding-left: 6px;
}
.combo-btn {
    width: 40px;
    height: 40px;
    margin-left: 9px;
    background-color: #f9f9f9;
    border-radius: 10px;
    box-shadow: 0 1px 2px #ddd;
    display: flex;
    align-items: center;
    justify-content: center;
}
.g-b3 {
    margin-left: 16px;
    margin-right: 11px;
}
.big-time {
    position: relative;
    flex: none;
    width: 460px;
    height: 70px;
    margin-top: 31px;
    background-color: #343646;
    color: #fff;
    font-family: "DejaVu Sans", sans-serif;
    font-stretch: condensed;
    font-size: 58px;
    letter-spacing: 2.5px;
    line-height: 74px;
    padding-left: 5px;
    white-space: nowrap;
    overflow: hidden;
}
.tri {
    position: absolute;
    right: 5px;
    top: 7px;
    width: 0;
    height: 0;
    border-left: 9px solid transparent;
    border-right: 9px solid transparent;
    border-top: 10px solid #fff;
}
.tri.big {
    right: 0;
    top: 31px;
    border-left-width: 8px;
    border-right-width: 8px;
}
.v-b {
    height: 126px;
    margin-top: 2px;
}
.g-b4 {
    margin-left: 5px;
    margin-right: 14px;
}
.selection {
    display: flex;
    padding-top: 17px;
}
.sel-labels {
    width: 95px;
    display: flex;
    flex-direction: column;
    align-items: flex-end;
    margin-right: 12px;
    font-size: 23.5px;
}
.sel-labels span {
    height: 40px;
    line-height: 30px;
}
.gear-small {
    width: 46px;
    height: 46px;
    background-color: #dedfe4;
    border-radius: 4px;
    margin-top: 0;
    display: flex;
    align-items: center;
    justify-content: center;
}
.small-time {
    position: relative;
    width: 330px;
    height: 38px;
    margin-bottom: 2px;
    background-color: #343646;
    color: #fff;
    font-family: "DejaVu Sans", sans-serif;
    font-stretch: condensed;
    font-size: 25px;
    letter-spacing: 6px;
    word-spacing: -7px;
    line-height: 43px;
    padding-left: 5px;
    white-space: nowrap;
}
.speedbar {
    flex: none;
    height: 65px;
    padding-top: 4px;
    border-bottom: 3px solid #cfcfd1;
    display: flex;
    align-items: flex-start;
}
.g-b5 {
    margin: 12px 0 0 5px;
}
.play-small {
    width: 54px;
    height: 54px;
    margin-left: 5px;
    background-color: #dedfe4;
    border-radius: 6px;
    display: flex;
    align-items: center;
    justify-content: center;
}
.speed {
    width: 276px;
    height: 36px;
    margin: 0 0 0 9px;
    top: 5px;
}
.speed .mark {
    font-size: 20px;
    line-height: 22px;
    font-weight: bold;
    color: #222;
}
.m-plus {
    left: auto;
    right: 4px;
}
.k-speed {
    left: 81px;
    top: 17px;
}
.speed .knob {
    width: 25px;
    height: 27px;
}
.v-s {
    height: 62px;
    margin-left: 9px;
    margin-top: -4px;
}

.statusbar {
    flex: 1;
    background: linear-gradient(#ececee, #dcdcde);
    display: flex;
    align-items: center;
    font-size: 23.7px;
    color: #222;
    padding: 2px 0 0 10px;
}
.st1 {
    width: 326px;
}

/* popup */
.menu {
    position: absolute;
    left: 272px;
    top: 414px;
    width: 410px;
    height: 812px;
    padding: 11px 10px 0;
    border-radius: 14px;
    background: linear-gradient(#e3e3e4 0, #e1e3e5 62%, #c5c7d2 75%, #b2b5bf 90%, #afb2bc 100%);
    box-shadow: 0 4px 14px rgba(0, 0, 0, 0.3);
    font-family: Inter, "Liberation Sans", sans-serif;
    font-size: 25.6px;
    color: #1e1e1e;
}
.mi {
    position: relative;
    height: 44px;
    line-height: 44px;
    padding-left: 36px;
    border-radius: 8px;
}
.mi.off {
    color: #a2a3a8;
}
.mi.hot {
    background-color: #a5a7b0;
    color: #fff;
}
.msep {
    height: 22px;
    margin: 0 18px;
    background: linear-gradient(#c3c4c9, #c3c4c9) 0 9px / 100% 2px no-repeat;
}
.tick {
    position: absolute;
    left: 9px;
    top: 10px;
    fill: none;
    stroke: #1e1e1e;
    stroke-width: 4;
}
.chev {
    position: absolute;
    right: 22px;
    top: 12px;
    fill: none;
    stroke: #1e1e1e;
    stroke-width: 3;
}
.ring-mark {
    position: absolute;
    left: 250px;
    top: 372px;
    fill: none;
    stroke: #e8442a;
    stroke-width: 3.5;
}
```
